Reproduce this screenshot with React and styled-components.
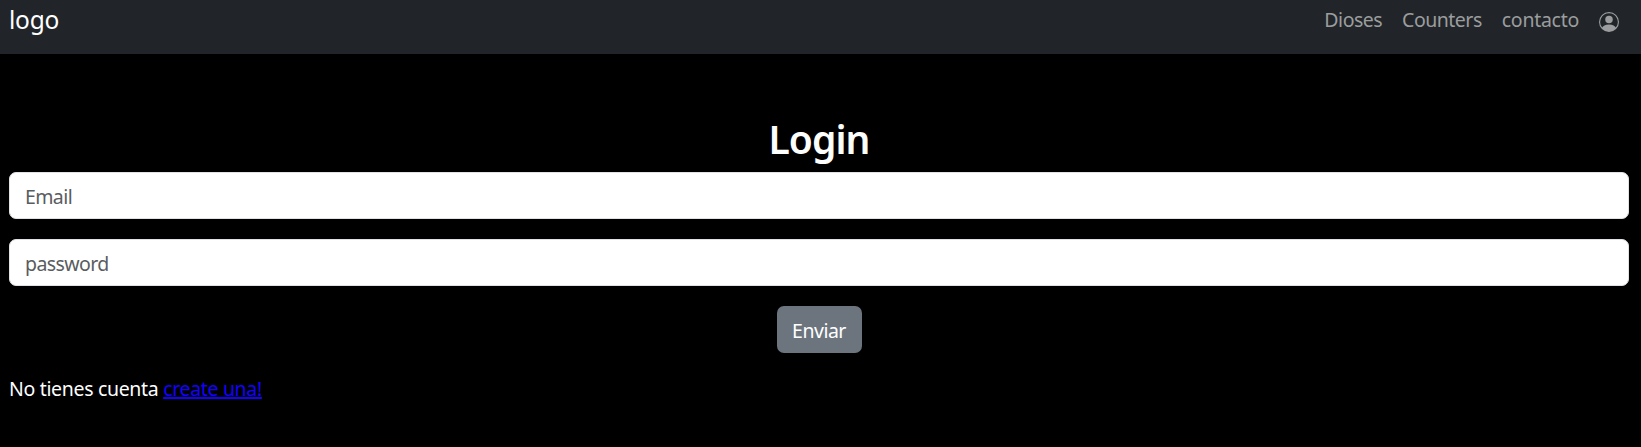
import React from "react";
import styled, { createGlobalStyle } from "styled-components";

const GlobalStyle = createGlobalStyle`
  *, *::before, *::after { box-sizing: border-box; }
  body {
    margin: 0;
    min-height: 100vh;
    background: #000;
    color: #fff;
    font: 400 19.5px/30px "Noto Sans", "Open Sans", sans-serif;
    overflow: hidden;
  }
`;

const Navbar = styled.header`
  display: flex;
  justify-content: space-between;
  align-items: flex-start;
  height: 54px;
  padding: 0 22px 0 9px;
  background: #212529;
`;

const Brand = styled.a`
  color: #fff;
  font-size: 24.5px;
  line-height: 40px;
  letter-spacing: -0.2px;
  text-decoration: none;
`;

const Nav = styled.nav`
  display: flex;
  gap: 20px;
  line-height: 40px;
`;

const NavLink = styled.a`
  color: #9b9d9e;
  letter-spacing: ${(p) => p.$tracking || "-0.5px"};
  text-decoration: none;
`;

const UserIcon = styled.svg`
  display: block;
  width: 20px;
  height: 20px;
  margin-top: 12px;
  fill: currentColor;
`;

const Main = styled.main`
  padding: 65px 12px 0 9px;
`;

const Form = styled.form`
  display: flex;
  flex-direction: column;
  align-items: center;
`;

const Title = styled.h1`
  margin: 0 0 13px;
  font-size: 39px;
  font-weight: 600;
  line-height: 40px;
  letter-spacing: -0.9px;
`;

const Field = styled.input`
  display: block;
  width: 100%;
  height: 47px;
  margin: 0 0 20px;
  padding: 2px 15px 0;
  border: 1px solid #dee2e6;
  border-radius: 7px;
  background: #fff;
  color: #212529;
  font: inherit;
  letter-spacing: -0.6px;

  &::placeholder {
    color: #595c5f;
    opacity: 1;
  }
`;

const Submit = styled.button`
  width: 85px;
  height: 47px;
  padding: 2px 0 0;
  border: 0;
  border-radius: 7px;
  background: #6c757d;
  color: #fff;
  font: inherit;
  letter-spacing: -0.5px;
`;

const Signup = styled.p`
  margin: 21px 0 0;
  letter-spacing: -0.33px;
`;

const SignupLink = styled.a`
  color: #1500ff;
  text-decoration: underline;
  text-decoration-thickness: 2px;
  text-underline-offset: 1px;
  text-decoration-skip-ink: none;
`;

export default function App() {
  return (
    <>
      <GlobalStyle />
      <Navbar>
        <Brand>logo</Brand>
        <Nav>
          <NavLink>Dioses</NavLink>
          <NavLink>Counters</NavLink>
          <NavLink $tracking="-0.27px">contacto</NavLink>
          <NavLink aria-label="Cuenta">
            <UserIcon viewBox="0 0 16 16">
              <path d="M11 6a3 3 0 1 1-6 0 3 3 0 0 1 6 0" />
              <path
                fillRule="evenodd"
                d="M0 8a8 8 0 1 1 16 0A8 8 0 0 1 0 8m8-7a7 7 0 0 0-5.468 11.37C3.242 11.226 4.805 10 8 10s4.757 1.225 5.468 2.37A7 7 0 0 0 8 1"
              />
            </UserIcon>
          </NavLink>
        </Nav>
      </Navbar>
      <Main>
        <Form onSubmit={(e) => e.preventDefault()}>
          <Title>Login</Title>
          <Field type="email" placeholder="Email" />
          <Field type="password" placeholder="password" />
          <Submit type="submit">Enviar</Submit>
        </Form>
        <Signup>
          No tienes cuenta <SignupLink href="#">create una!</SignupLink>
        </Signup>
      </Main>
    </>
  );
}
